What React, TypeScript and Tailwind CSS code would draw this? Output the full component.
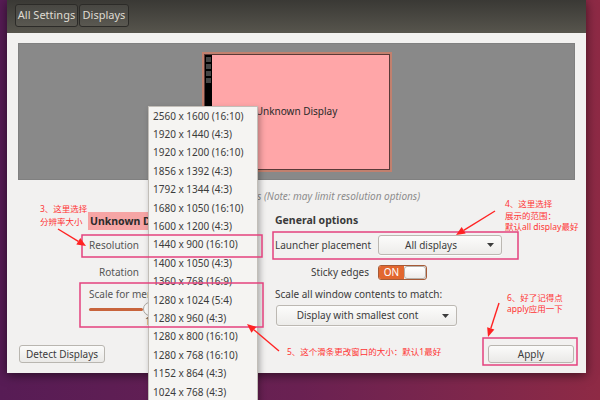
import React from 'react'

const resolutions = [
  '2560 x 1600 (16:10)',
  '1920 x 1440 (4:3)',
  '1920 x 1200 (16:10)',
  '1856 x 1392 (4:3)',
  '1792 x 1344 (4:3)',
  '1680 x 1050 (16:10)',
  '1600 x 1200 (4:3)',
  '1440 x 900 (16:10)',
  '1400 x 1050 (4:3)',
  '1360 x 768 (16:9)',
  '1280 x 1024 (5:4)',
  '1280 x 960 (4:3)',
  '1280 x 800 (16:10)',
  '1280 x 768 (16:10)',
  '1152 x 864 (4:3)',
  '1024 x 768 (4:3)',
]

// red arrow with a filled head at (x2, y2)
const Arrow = ({ x1, y1, x2, y2 }: { x1: number; y1: number; x2: number; y2: number }) => {
  const a = Math.atan2(y2 - y1, x2 - x1)
  const len = 9
  const w = 3.8
  const bx = x2 - len * Math.cos(a)
  const by = y2 - len * Math.sin(a)
  const p1 = `${bx + w * Math.sin(a)},${by - w * Math.cos(a)}`
  const p2 = `${bx - w * Math.sin(a)},${by + w * Math.cos(a)}`
  return (
    <g>
      <line x1={x1} y1={y1} x2={bx} y2={by} stroke="#ff2323" strokeWidth="1.4" />
      <polygon points={`${x2},${y2} ${p1} ${p2}`} fill="#ff2323" />
    </g>
  )
}

const Combo = ({ label, width }: { label: string; width: string }) => (
  <div
    className={`${width} h-full flex items-center rounded-[3px] border border-[#bcb8b2] bg-linear-to-b from-[#fcfcfb] to-[#edecea] shadow-[0_1px_0_rgba(255,255,255,0.8)]`}
  >
    <span className="flex-1 text-center whitespace-nowrap overflow-hidden text-[#3c3c3c]">{label}</span>
    <svg width="7" height="4" viewBox="0 0 7 4" className="ml-[4px] mr-[7px]">
      <polygon points="0,0 7,0 3.5,4" fill="#3c3c3c" />
    </svg>
  </div>
)

const Button = ({ label }: { label: string }) => (
  <div className="w-[86px] h-[18px] flex items-center justify-center rounded-[3px] border border-[#b9b6b0] bg-linear-to-b from-[#fbfbfa] to-[#eae9e7] text-[#3c3c3c]">
    {label}
  </div>
)

export default function App() {
  return (
    <div className="relative w-[600px] h-[400px] overflow-hidden bg-linear-to-r from-[#571c55] via-[#6a2152] to-[#8e2a45] font-['Noto_Sans','Noto_Sans_CJK_SC',sans-serif] text-[10px] text-[#3c3c3c]">
      <div className="pl-[7px]">
        <div className="w-[579px] h-[373px] flex flex-col shadow-[0_2px_10px_rgba(0,0,0,0.55)]">
          {/* header bar */}
          <div className="h-[33px] flex items-start gap-[1px] pl-[8px] pt-[4px] bg-linear-to-b from-[#3a3935] to-[#57554d]">
            <div className="w-[63px] h-[23px] flex items-center justify-center rounded-[3px] border border-[#2c2b28] bg-white/5 text-[11px] text-[#dfdbd2]">
              All Settings
            </div>
            <div className="w-[50px] h-[23px] flex items-center justify-center rounded-[3px] border border-[#2c2b28] bg-white/5 text-[11px] text-[#dfdbd2]">
              Displays
            </div>
          </div>

          {/* body */}
          <div className="flex-1 flex flex-col bg-[#f2f1f0] px-[11px] pt-[10px] pb-[10px]">
            <div className="h-[137px] flex items-center justify-center bg-[#898989] border border-[#808080]">
              <div className="w-[190px] h-[120px] flex border-2 border-[#c2806e]">
                <div className="flex-1 flex border border-[#5a3a38] bg-[#ffa6a8]">
                  <div className="w-[7px] bg-black flex flex-col gap-[1.5px] pt-[2px] px-[1px]">
                    <div className="h-[5.5px] bg-[#454545]" />
                    <div className="h-[5.5px] bg-[#454545]" />
                    <div className="h-[5.5px] bg-[#454545]" />
                    <div className="h-[5.5px] bg-[#454545]" />
                  </div>
                  <div className="flex-1 flex items-center justify-center pr-[7px] text-[#2a2a2a]">Unknown Display</div>
                </div>
              </div>
            </div>

            <div className="mt-[9px] h-[14px] leading-[14px] pl-[239px] italic text-[#8c8c8c]">
              s (Note: may limit resolution options)
            </div>

            <div className="mt-[7px] flex">
              {/* left column */}
              <div className="ml-[70px] w-[187px] flex flex-col">
                <div className="h-[22px] flex items-center">
                  <span className="h-[18px] leading-[18px] pl-[2px] pr-[4px] bg-[#f6a5a5] font-bold text-[10.5px] text-[#2b2b2b] whitespace-nowrap">
                    Unknown Display
                  </span>
                </div>
                <div className="h-[26px] flex items-center pl-[1px]">
                  <span className="w-[50px] text-right text-[#555]">Resolution</span>
                </div>
                <div className="h-[29px] flex items-center pl-[1px]">
                  <span className="w-[50px] text-right text-[#555]">Rotation</span>
                </div>
                <div className="h-[14px] flex items-center pl-[1px] whitespace-nowrap text-[#555]">
                  Scale for menu and title bars:
                </div>
                <div className="flex flex-col pl-[1px]">
                  <div className="mt-[1px] h-[14px] flex items-center">
                    <div className="w-[54px] h-[3px] rounded-full bg-[#c8643c]" />
                    <div className="w-[14px] h-[14px] rounded-full border border-[#a9a49d] bg-[#fbfbfa]" />
                    <div className="w-[50px] h-[3px] rounded-full bg-[#c9c5bf]" />
                  </div>
                  <div className="pl-[56px] leading-[10px] text-[#555]">1</div>
                </div>
              </div>

              {/* right column */}
              <div className="flex-1 flex flex-col">
                <div className="h-[22px] flex items-center font-bold text-[10.5px] text-[#3a3a3a]">General options</div>
                <div className="h-[26px] flex items-center">
                  <span className="w-[94px] text-right whitespace-nowrap">Launcher placement</span>
                  <div className="ml-[9px] h-[20px]">
                    <Combo label="All displays" width="w-[124px]" />
                  </div>
                </div>
                <div className="h-[29px] flex items-center">
                  <span className="w-[94px] text-right whitespace-nowrap">Sticky edges</span>
                  <div className="ml-[9px] w-[49px] h-[15px] flex rounded-[3px] border border-[#a65a36] overflow-hidden">
                    <div className="w-[25px] flex items-center justify-center bg-[#e2672f] text-white text-[10px]">ON</div>
                    <div className="flex-1 rounded-[3px] border border-[#b7b1aa] bg-linear-to-b from-[#ffffff] to-[#eeedeb]" />
                  </div>
                </div>
                <div className="h-[14px] flex items-center whitespace-nowrap">Scale all window contents to match:</div>
                <div className="mt-[4px] h-[21px] pl-[1px]">
                  <Combo label="Display with smallest cont" width="w-[181px]" />
                </div>
              </div>
            </div>

            <div className="mt-auto flex justify-between px-[1px]">
              <Button label="Detect Displays" />
              <Button label="Apply" />
            </div>
          </div>
        </div>
      </div>

      {/* open resolution menu */}
      <div className="absolute left-[148px] top-[106px] w-[110px] border border-[#c2beb8] bg-[#f5f4f2] shadow-[2px_3px_6px_rgba(0,0,0,0.3)]">
        {resolutions.map((r) => (
          <div key={r} className="h-[18.4px] flex items-center pl-[4px] whitespace-nowrap text-[#3c3c3c]">
            {r}
          </div>
        ))}
      </div>

      {/* annotations */}
      <svg className="absolute inset-0 pointer-events-none" width="600" height="400" viewBox="0 0 600 400">
        <g fill="none" stroke="#e4417e" strokeWidth="1.5">
          <rect x="82" y="235" width="180" height="22" />
          <rect x="80" y="283" width="183" height="44" />
          <rect x="273" y="232" width="245" height="27" />
          <rect x="483" y="338" width="94" height="27" />
        </g>
        <Arrow x1={58} y1={229} x2={86} y2={246} />
        <Arrow x1={495} y1={211} x2={456} y2={235} />
        <Arrow x1={279} y1={351} x2={247} y2={324} />
        <Arrow x1={499} y1={303} x2={488} y2={337} />
      </svg>

      <div className="absolute left-[40px] top-[202px] text-[8.5px] leading-[13px] text-[#ff3434] whitespace-nowrap">
        <div>3、这里选择</div>
        <div>分辨率大小</div>
      </div>
      <div className="absolute left-[505px] top-[198px] text-[8.5px] leading-[11.5px] text-[#ff3434] whitespace-nowrap">
        <div>4、这里选择</div>
        <div>展示的范围：</div>
        <div>默认all display最好</div>
      </div>
      <div className="absolute left-[287px] top-[346px] text-[8.5px] leading-[12px] text-[#ff3434] whitespace-nowrap">
        5、这个滑条更改窗口的大小：默认1最好
      </div>
      <div className="absolute left-[507px] top-[292px] text-[8.5px] leading-[11px] text-[#ff3434] whitespace-nowrap">
        <div>6、好了记得点</div>
        <div>apply应用一下</div>
      </div>
    </div>
  )
}
